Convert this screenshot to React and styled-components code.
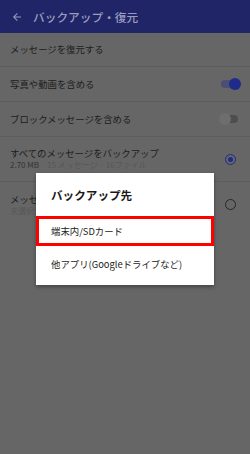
import React from 'react';
import styled, { createGlobalStyle } from 'styled-components';

const GlobalStyle = createGlobalStyle`
  html, body {
    margin: 0;
    padding: 0;
    background: #666666;
  }
  body {
    font-family: "Noto Sans CJK JP", "Noto Sans", Roboto, sans-serif;
  }
`;

const Screen = styled.div`
  position: relative;
  width: 250px;
  height: 454px;
  overflow: hidden;
  background: #666666;
`;

const AppBar = styled.div`
  display: flex;
  align-items: center;
  height: 33px;
  padding-left: 11px;
  gap: 10px;
  background: #1f2567;
  color: #9a9dbd;
`;

const Title = styled.span`
  font-size: 11.7px;
  font-weight: 500;
`;

const Row = styled.div`
  display: flex;
  align-items: center;
  justify-content: space-between;
  height: ${(p) => p.h}px;
  padding: 0 10px;
  box-sizing: border-box;
  border-bottom: ${(p) => (p.last ? 'none' : '1px solid #5d5d5d')};
`;

const RowText = styled.div`
  display: flex;
  flex-direction: column;
  gap: 1px;
`;

const Label = styled.span`
  font-size: 9.4px;
  color: #1c1c1c;
  line-height: 1.3;
`;

const Sub = styled.span`
  font-size: 8px;
  color: #333333;
  line-height: 1.3;
  span {
    color: #575757;
  }
`;

const Track = styled.div`
  position: relative;
  width: 17px;
  height: 8px;
  border-radius: 4px;
  margin-right: 2px;
  background: ${(p) => (p.on ? '#4a4f73' : '#4e4e4e')};
`;

const Thumb = styled.div`
  position: absolute;
  top: -2px;
  left: ${(p) => (p.on ? '8px' : '-2px')};
  width: 12px;
  height: 12px;
  border-radius: 50%;
  background: ${(p) => (p.on ? '#1f2a8a' : '#6e6e6e')};
`;

const Radio = styled.div`
  width: 9px;
  height: 9px;
  border-radius: 50%;
  margin-right: 4px;
  border: 1.2px solid ${(p) => (p.on ? '#1f2a8a' : '#262626')};
  display: flex;
  align-items: center;
  justify-content: center;
  &::after {
    content: '';
    display: ${(p) => (p.on ? 'block' : 'none')};
    width: 5px;
    height: 5px;
    border-radius: 50%;
    background: #1f2a8a;
  }
`;

const Dialog = styled.div`
  position: absolute;
  left: 36px;
  top: 173px;
  width: 178px;
  background: #ffffff;
  box-shadow: 0 2px 4px rgba(0, 0, 0, 0.35);
  padding-bottom: 3px;
`;

const DialogTitle = styled.div`
  font-size: 11.6px;
  font-weight: 700;
  color: #1a1a1a;
  height: 43px;
  display: flex;
  align-items: center;
  padding-left: 15px;
`;

const Option = styled.div`
  display: flex;
  align-items: center;
  height: ${(p) => (p.selected ? '30px' : '36px')};
  padding-left: ${(p) => (p.selected ? '12px' : '15px')};
  box-sizing: border-box;
  border: ${(p) => (p.selected ? '3px solid #ff0000' : 'none')};
  font-size: 9.4px;
  color: #222222;
`;

function Switch({ on }) {
  return (
    <Track on={on ? 1 : 0}>
      <Thumb on={on ? 1 : 0} />
    </Track>
  );
}

export default function App() {
  return (
    <>
      <GlobalStyle />
      <Screen>
        <AppBar>
          <svg width="12" height="12" viewBox="0 0 24 24">
            <path
              d="M20 11H7.83l5.59-5.59L12 4l-8 8 8 8 1.41-1.41L7.83 13H20v-2z"
              fill="#9a9dbd"
            />
          </svg>
          <Title>バックアップ・復元</Title>
        </AppBar>
        <Row h={34}>
          <Label>メッセージを復元する</Label>
        </Row>
        <Row h={35}>
          <Label>写真や動画を含める</Label>
          <Switch on />
        </Row>
        <Row h={35}>
          <Label>ブロックメッセージを含める</Label>
          <Switch />
        </Row>
        <Row h={45}>
          <RowText>
            <Label>すべてのメッセージをバックアップ</Label>
            <Sub>
              2.70 MB <span>· 15 メッセージ · 16ファイル</span>
            </Sub>
          </RowText>
          <Radio on />
        </Row>
        <Row h={45} last>
          <RowText>
            <Label>メッセージを選択してバックアップ</Label>
            <Sub>
              <span>未選択</span>
            </Sub>
          </RowText>
          <Radio />
        </Row>

        <Dialog>
          <DialogTitle>バックアップ先</DialogTitle>
          <Option selected>端末内/SDカード</Option>
          <Option>他アプリ(Googleドライブなど)</Option>
        </Dialog>
      </Screen>
    </>
  );
}
